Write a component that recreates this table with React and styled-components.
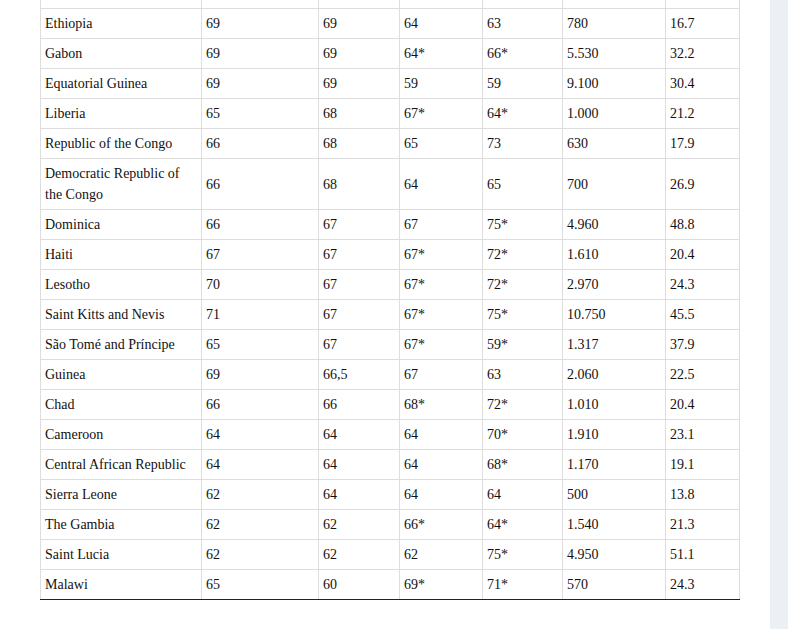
import React from "react";
import styled, { createGlobalStyle } from "styled-components";

const Global = createGlobalStyle`
  html, body {
    margin: 0;
    padding: 0;
    background: #ffffff;
    overflow: hidden;
  }
  body {
    font-family: "Liberation Serif", "Times New Roman", serif;
    color: #111111;
  }
`;

const Page = styled.div`
  display: flex;
  height: 629px;
  overflow: hidden;
`;

const Main = styled.main`
  width: 770px;
  flex: none;
  padding: 0 31px 0 40px;
  box-sizing: border-box;
  background: #ffffff;
  overflow: hidden;
`;

const Side = styled.aside`
  flex: 1;
  background: #eceff4;
`;

const Table = styled.table`
  border-collapse: collapse;
  table-layout: fixed;
  width: 699px;
  font-size: 14px;
  line-height: 21px;
`;

const Cell = styled.td`
  border: 1px solid #dddddd;
  padding: 4px 4px;
  vertical-align: middle;
  text-align: left;
  ${(p) => (p.$last ? "border-bottom: 1px solid #222222;" : "")}
`;

const SpacerCell = styled.td`
  border: 1px solid #dddddd;
  border-top: 0;
  padding: 0;
  height: 8px;
`;

const Heading = styled.h2`
  margin: 26px 0 0;
  font-family: "Liberation Serif", "Times New Roman", serif;
  font-weight: bold;
  font-size: 24px;
  line-height: normal;
  color: #111111;
`;

const widths = [161, 117, 81, 83, 80, 103, 74];

const rows = [
  ["Ethiopia", "69", "69", "64", "63", "780", "16.7"],
  ["Gabon", "69", "69", "64*", "66*", "5.530", "32.2"],
  ["Equatorial Guinea", "69", "69", "59", "59", "9.100", "30.4"],
  ["Liberia", "65", "68", "67*", "64*", "1.000", "21.2"],
  ["Republic of the Congo", "66", "68", "65", "73", "630", "17.9"],
  ["Democratic Republic of the Congo", "66", "68", "64", "65", "700", "26.9"],
  ["Dominica", "66", "67", "67", "75*", "4.960", "48.8"],
  ["Haiti", "67", "67", "67*", "72*", "1.610", "20.4"],
  ["Lesotho", "70", "67", "67*", "72*", "2.970", "24.3"],
  ["Saint Kitts and Nevis", "71", "67", "67*", "75*", "10.750", "45.5"],
  ["São Tomé and Príncipe", "65", "67", "67*", "59*", "1.317", "37.9"],
  ["Guinea", "69", "66,5", "67", "63", "2.060", "22.5"],
  ["Chad", "66", "66", "68*", "72*", "1.010", "20.4"],
  ["Cameroon", "64", "64", "64", "70*", "1.910", "23.1"],
  ["Central African Republic", "64", "64", "64", "68*", "1.170", "19.1"],
  ["Sierra Leone", "62", "64", "64", "64", "500", "13.8"],
  ["The Gambia", "62", "62", "66*", "64*", "1.540", "21.3"],
  ["Saint Lucia", "62", "62", "62", "75*", "4.950", "51.1"],
  ["Malawi", "65", "60", "69*", "71*", "570", "24.3"],
];

export default function App() {
  return (
    <>
      <Global />
      <Page>
        <Main>
          <Table>
            <colgroup>
              {widths.map((w, i) => (
                <col key={i} style={{ width: w }} />
              ))}
            </colgroup>
            <tbody>
              <tr>
                {widths.map((w, i) => (
                  <SpacerCell key={i} />
                ))}
              </tr>
              {rows.map((r, ri) => (
                <tr key={ri}>
                  {r.map((c, ci) => (
                    <Cell key={ci} $last={ri === rows.length - 1}>
                      {c}
                    </Cell>
                  ))}
                </tr>
              ))}
            </tbody>
          </Table>
          <Heading>Countries by continent</Heading>
        </Main>
        <Side />
      </Page>
    </>
  );
}
